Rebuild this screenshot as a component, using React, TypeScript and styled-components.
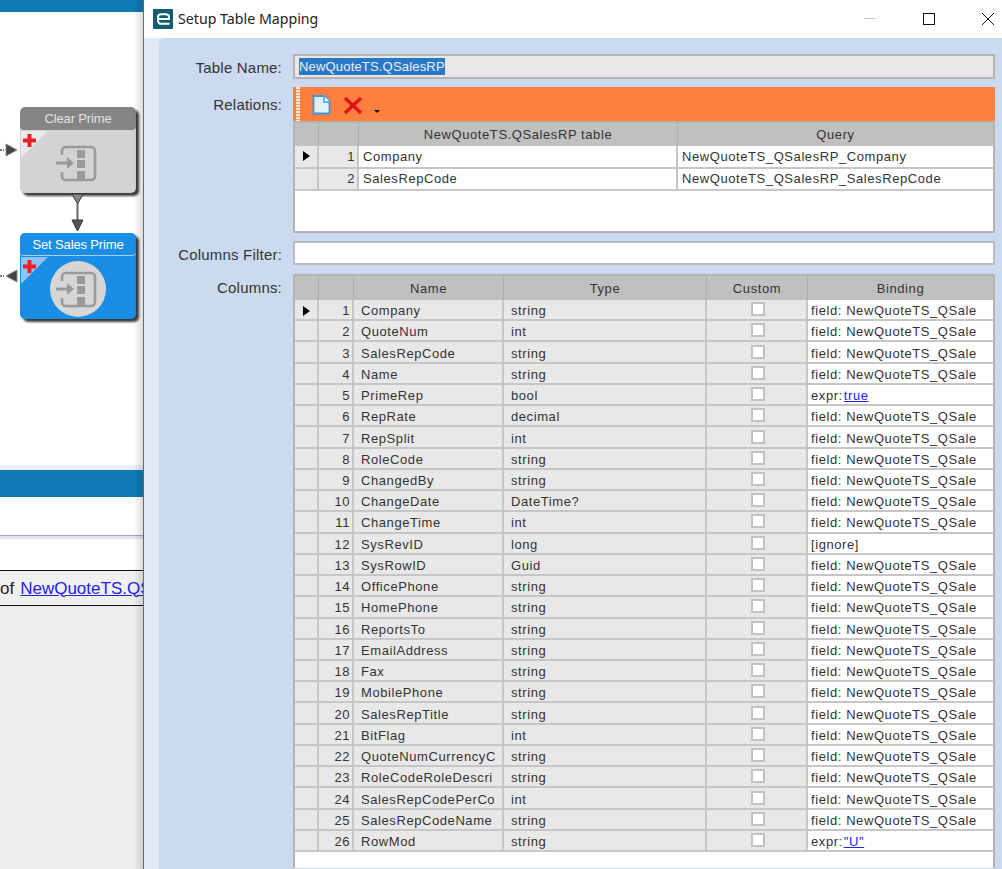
import styled, { createGlobalStyle } from "styled-components";

const GlobalStyle = createGlobalStyle`
  html, body { margin: 0; padding: 0; height: 100%; overflow: hidden; background: #fff; }
  #root { height: 869px; }
  * { box-sizing: border-box; }
`;

const Screen = styled.div`
  display: flex;
  width: 1002px;
  height: 869px;
  overflow: hidden;
  font-family: "Liberation Sans", Arial, sans-serif;
`;

/* ---- background designer window ---- */
const Backdrop = styled.div`
  position: relative;
  width: 143px;
  flex: none;
  display: flex;
  flex-direction: column;
  overflow: hidden;
  &::after {
    content: "";
    position: absolute;
    top: 0;
    right: 0;
    bottom: 0;
    width: 10px;
    background: linear-gradient(to right, rgba(0, 0, 0, 0), rgba(0, 0, 0, 0.13));
  }
`;
const TopStrip = styled.div`
  height: 12px;
  flex: none;
  background: #107ab5;
`;
const Canvas = styled.div`
  position: relative;
  height: 453px;
  flex: none;
  background: #fff;
`;
const LavenderLine = styled.div`
  height: 5px;
  flex: none;
  background: #eeeffb;
`;
const SectionBar = styled.div`
  height: 27px;
  flex: none;
  background: #107ab5;
`;
const BlankRow = styled.div<{ $h: number }>`
  height: ${({ $h }) => $h}px;
  flex: none;
  background: #fff;
`;
const Rule = styled.div`
  height: 4px;
  flex: none;
  background: #e0e3f4;
  border-top: 1px solid #a8a8a8;
`;
const MessageBar = styled.div`
  height: 36px;
  flex: none;
  display: flex;
  align-items: center;
  padding-top: 1px;
  white-space: nowrap;
  background: #f0f0f0;
  border-top: 1px solid #111;
  border-bottom: 1px solid #111;
  font-size: 17px;
  color: #222;
`;
const MessageLink = styled.a`
  margin-left: 6px;
  color: #2222ee;
  text-decoration: underline;
`;
const Filler = styled.div`
  flex: 1;
  background: #eeeeee;
`;

const Node = styled.div<{ $top: number; $active?: boolean }>`
  position: absolute;
  left: 20px;
  top: ${({ $top }) => $top}px;
  width: 116px;
  height: 86px;
  border-radius: 5px;
  overflow: hidden;
  background: ${({ $active }) => ($active ? "#1a8de4" : "#d3d3d3")};
`;
const NodeShadow = styled.div<{ $top: number }>`
  position: absolute;
  left: 23px;
  top: ${({ $top }) => $top}px;
  width: 116px;
  height: 86px;
  border-radius: 5px;
  background: #3c3c3c;
  filter: blur(1px);
`;
const NodeTitle = styled.div<{ $active?: boolean }>`
  height: 23px;
  display: flex;
  align-items: center;
  justify-content: center;
  font-size: 13px;
  letter-spacing: -0.15px;
  color: ${({ $active }) => ($active ? "#fff" : "#e2e2e2")};
  background: ${({ $active }) => ($active ? "#1a8de4" : "#858585")};
  border-bottom: 1px solid ${({ $active }) => ($active ? "#a8d0ee" : "#858585")};
  border-radius: 5px 5px 4px 4px;
`;
const NodeCorner = styled.div<{ $active?: boolean }>`
  position: absolute;
  left: 1px;
  top: 24px;
  width: 0;
  height: 0;
  border-style: solid;
  border-width: 27px 27px 0 0;
  border-color: ${({ $active }) => ($active ? "#8ec4ee" : "#e9e9e9")} transparent transparent transparent;
`;
const NodePlus = styled.svg`
  position: absolute;
  left: 3px;
  top: 27px;
`;
const NodeIcon = styled.svg`
  position: absolute;
  left: 36px;
  top: 35px;
`;
const NodeDisc = styled.div`
  position: absolute;
  left: 30px;
  top: 28px;
  width: 56px;
  height: 56px;
  border-radius: 50%;
  background: #d6d6d6;
`;
const Wires = styled.svg`
  position: absolute;
  left: 0;
  top: 0;
`;

const StepIcon = () => (
  <NodeIcon width="42" height="42" viewBox="0 0 42 42">
    <path d="M6 13V9a4 4 0 0 1 4-4h25a4 4 0 0 1 4 4v25a4 4 0 0 1-4 4H10a4 4 0 0 1-4-4v-4" fill="none" stroke="#9a9a9a" strokeWidth="2.6" />
    <path d="M0 21h15" stroke="#9a9a9a" strokeWidth="3" />
    <path d="M11 15l7 6-7 6z" fill="#9a9a9a" />
    <rect x="21" y="8" width="8" height="8" fill="#9a9a9a" />
    <rect x="21" y="18" width="8" height="8" fill="#9a9a9a" />
    <rect x="21" y="29" width="8" height="8" fill="#9a9a9a" />
  </NodeIcon>
);

const Plus = () => (
  <NodePlus width="13" height="13" viewBox="0 0 13 13">
    <path d="M4.5 0h4v4.5H13v4H8.5V13h-4V8.5H0v-4h4.5z" fill="#ee1c25" />
  </NodePlus>
);

/* ---- dialog ---- */
const Dialog = styled.div`
  flex: 1;
  display: flex;
  flex-direction: column;
  min-width: 0;
  border-left: 1px solid #6a6a6a;
  background: #fff;
`;
const TitleBar = styled.div`
  height: 38px;
  flex: none;
  display: flex;
  align-items: center;
  padding: 0 8px 0 9px;
`;
const AppLogo = styled.svg`
  flex: none;
`;
const TitleText = styled.div`
  margin: -2px 0 0 5px;
  font-family: "Noto Sans", sans-serif;
  font-size: 14.2px;
  color: #222;
`;
const WindowButtons = styled.div`
  margin-left: auto;
  display: flex;
  align-items: center;
  gap: 47px;
`;
const DialogBody = styled.div`
  flex: 1;
  min-height: 0;
  padding-left: 15px;
  background: #e0e9f5;
`;
const Panel = styled.div`
  height: 100%;
  display: grid;
  grid-template-columns: 123px 702px;
  grid-template-rows: 25px 146px 24px auto;
  row-gap: 8px;
  column-gap: 11px;
  align-content: start;
  padding-top: 16px;
  background: #cbdaef;
  border-radius: 5px 0 0 0;
`;
const Label = styled.div<{ $top?: number }>`
  padding-top: ${({ $top }) => $top ?? 5}px;
  text-align: right;
  font-size: 15px;
  letter-spacing: 0.2px;
  color: #333;
`;
const NameInput = styled.div`
  display: flex;
  align-items: center;
  padding-left: 4px;
  background: #e8e8e8;
  border: 2px solid #b2b2b2;
  font-size: 13px;
  letter-spacing: 0.18px;
`;
const Selected = styled.span`
  padding: 1px 0;
  background: #2a78c8;
  color: #e9f0f8;
`;
const FilterInput = styled.div`
  background: #fff;
  border: 2px solid #b8bcc2;
`;
const RelationsBox = styled.div`
  display: flex;
  flex-direction: column;
`;
const Toolbar = styled.div`
  position: relative;
  height: 34px;
  flex: none;
  display: flex;
  align-items: flex-start;
  background: #ff7f3f;
`;
const Gripper = styled.div`
  width: 4px;
  height: 34px;
  margin-left: 3px;
  background: repeating-linear-gradient(to bottom, #f2e7df 0 2px, #ff9c6c 2px 3px);
`;
const ToolDoc = styled.svg`
  margin: 8px 0 0 12px;
`;
const ToolX = styled.svg`
  margin: 9px 0 0 12px;
`;
const ToolCaret = styled.div`
  width: 0;
  height: 0;
  margin: 23px 0 0 11px;
  border-style: solid;
  border-width: 3px 3px 0;
  border-color: #111 transparent transparent;
`;
const GridBox = styled.div<{ $clip?: boolean }>`
  flex: 1;
  min-height: 0;
  background: #fff;
  border: 2px solid #b4b4b4;
  ${({ $clip }) => ($clip ? "border-bottom: none; height: 594px; margin-top: 1px;" : "")}
`;
const Row = styled.div<{ $cols: string; $h: number; $drop?: number }>`
  display: grid;
  grid-template-columns: ${({ $cols }) => $cols};
  height: ${({ $h }) => $h}px;
  font-size: 13px;
  letter-spacing: 0.58px;
  color: #333;
  & > div { padding-top: ${({ $drop }) => $drop ?? 0}px; }
`;
const HeaderCell = styled.div`
  display: flex;
  align-items: center;
  justify-content: center;
  background: #c0c0c0;
  border-right: 1px solid #aeaeae;
  &:last-child { border-right: none; }
`;
const Cell = styled.div<{ $white?: boolean; $center?: boolean; $right?: boolean; $inset?: number }>`
  display: flex;
  align-items: center;
  overflow: hidden;
  white-space: nowrap;
  padding-right: 2px;
  padding-left: ${({ $right, $inset }) => ($right ? 0 : $inset ?? 4)}px;
  justify-content: ${({ $center, $right }) => ($center ? "center" : $right ? "flex-end" : "flex-start")};
  background: ${({ $white }) => ($white ? "#fff" : "#e8e8e8")};
  border-right: 2px solid #c6c6c6;
  border-bottom: 2px solid #c6c6c6;
  &:last-child { border-right: none; }
`;
const Arrow = styled.div`
  width: 0;
  height: 0;
  margin-left: 4px;
  border-style: solid;
  border-width: 5.5px 0 5.5px 7px;
  border-color: transparent transparent transparent #000;
`;
const Check = styled.div`
  width: 14px;
  height: 14px;
  margin-bottom: 3px;
  background: #fff;
  border: 2px solid #c2c2c2;
`;
const ExprLink = styled.a`
  margin-left: 1px;
  color: #2222ee;
  text-decoration: underline;
`;

const relationCols = "24px 40px 319px 1fr";
const columnCols = "24px 35px 150px 203px 101px 1fr";
const field = "field: NewQuoteTS_QSale";

const relations = [
  ["Company", "NewQuoteTS_QSalesRP_Company"],
  ["SalesRepCode", "NewQuoteTS_QSalesRP_SalesRepCode"],
];

const columns: [string, string, string?][] = [
  ["Company", "string"],
  ["QuoteNum", "int"],
  ["SalesRepCode", "string"],
  ["Name", "string"],
  ["PrimeRep", "bool", "true"],
  ["RepRate", "decimal"],
  ["RepSplit", "int"],
  ["RoleCode", "string"],
  ["ChangedBy", "string"],
  ["ChangeDate", "DateTime?"],
  ["ChangeTime", "int"],
  ["SysRevID", "long", "ignore"],
  ["SysRowID", "Guid"],
  ["OfficePhone", "string"],
  ["HomePhone", "string"],
  ["ReportsTo", "string"],
  ["EmailAddress", "string"],
  ["Fax", "string"],
  ["MobilePhone", "string"],
  ["SalesRepTitle", "string"],
  ["BitFlag", "int"],
  ["QuoteNumCurrencyC", "string"],
  ["RoleCodeRoleDescri", "string"],
  ["SalesRepCodePerCo", "int"],
  ["SalesRepCodeName", "string"],
  ["RowMod", "string", '"U"'],
];

function Binding({ expr }: { expr?: string }) {
  if (!expr) return <>{field}</>;
  if (expr === "ignore") return <>[ignore]</>;
  return (
    <>
      expr:<ExprLink>{expr}</ExprLink>
    </>
  );
}

export default function App() {
  return (
    <Screen>
      <GlobalStyle />
      <Backdrop>
        <TopStrip />
        <Canvas>
          <NodeShadow $top={98} />
          <Node $top={95}>
            <NodeTitle>Clear Prime</NodeTitle>
            <NodeCorner />
            <Plus />
            <StepIcon />
          </Node>
          <NodeShadow $top={224} />
          <Node $top={221} $active>
            <NodeTitle $active>Set Sales Prime</NodeTitle>
            <NodeCorner $active />
            <Plus />
            <NodeDisc />
            <StepIcon />
          </Node>
          <Wires width="143" height="320" viewBox="0 0 143 320">
            <path d="M0 138h4" stroke="#555" strokeWidth="1.5" strokeDasharray="2 1" />
            <path d="M6 132l11 6-11 6z" fill="#444" stroke="#888" />
            <path d="M0 264h4" stroke="#555" strokeWidth="1.5" strokeDasharray="2 1" />
            <path d="M17 258l-11 6 11 6z" fill="#444" stroke="#888" />
            <path d="M72 182h11l-5.5 10z" fill="#888" stroke="#333" />
            <path d="M77.5 192v16" stroke="#666" strokeWidth="2" />
            <path d="M72 208h11l-5.5 11z" fill="#555" stroke="#333" />
          </Wires>
        </Canvas>
        <LavenderLine />
        <SectionBar />
        <BlankRow $h={38} />
        <Rule />
        <BlankRow $h={31} />
        <MessageBar>
          of<MessageLink>NewQuoteTS.QSalesRP</MessageLink>
        </MessageBar>
        <Filler />
      </Backdrop>

      <Dialog>
        <TitleBar>
          <AppLogo width="20" height="20" viewBox="0 0 20 20">
            <rect width="20" height="20" rx="1" fill="#0f5f70" />
            <path d="M5 10h11V8.2A3 3 0 0 0 13 5.2H8a3 3 0 0 0-3 3v3.6a3 3 0 0 0 3 3h8.5" fill="none" stroke="#fff" strokeWidth="2" />
          </AppLogo>
          <TitleText>Setup Table Mapping</TitleText>
          <WindowButtons>
            <svg width="12" height="12" viewBox="0 0 12 12">
              <path d="M0 5.5h12" stroke="#c8c8c8" />
            </svg>
            <svg width="12" height="12" viewBox="0 0 12 12">
              <rect x="0.5" y="0.5" width="11" height="11" fill="none" stroke="#111" />
            </svg>
            <svg width="12" height="12" viewBox="0 0 12 12">
              <path d="M0 0l12 12M12 0L0 12" stroke="#111" />
            </svg>
          </WindowButtons>
        </TitleBar>
        <DialogBody>
          <Panel>
            <Label>Table Name:</Label>
            <NameInput>
              <Selected>NewQuoteTS.QSalesRP</Selected>
            </NameInput>
            <Label $top={9}>Relations:</Label>
            <RelationsBox>
              <Toolbar>
                <Gripper />
                <ToolDoc width="19" height="20" viewBox="0 0 19 20">
                  <path d="M1.5 1h11l5 5v12.5h-16z" fill="#dff0fb" stroke="#3a97dc" strokeWidth="1.8" />
                  <path d="M12 1v6h6" fill="#fff" stroke="#3a97dc" strokeWidth="1.4" />
                </ToolDoc>
                <ToolX width="20" height="19" viewBox="0 0 20 19">
                  <path d="M2 2l16 15M18 2L2 17" stroke="#e0141c" strokeWidth="3.6" />
                </ToolX>
                <ToolCaret />
              </Toolbar>
              <GridBox>
                <Row $cols={relationCols} $h={23}>
                  <HeaderCell />
                  <HeaderCell />
                  <HeaderCell>NewQuoteTS.QSalesRP table</HeaderCell>
                  <HeaderCell>Query</HeaderCell>
                </Row>
                {relations.map(([name, query], i) => (
                  <Row key={name} $cols={relationCols} $h={22.5}>
                    <Cell>{i === 0 && <Arrow />}</Cell>
                    <Cell $right>{i + 1}</Cell>
                    <Cell $white>{name}</Cell>
                    <Cell $white>{query}</Cell>
                  </Row>
                ))}
              </GridBox>
            </RelationsBox>
            <Label>Columns Filter:</Label>
            <FilterInput />
            <Label $top={6}>Columns:</Label>
            <GridBox $clip>
              <Row $cols={columnCols} $h={24}>
                <HeaderCell />
                <HeaderCell />
                {["Name", "Type", "Custom", "Binding"].map((h) => (
                  <HeaderCell key={h}>{h}</HeaderCell>
                ))}
              </Row>
              {columns.map(([name, type, expr], i) => (
                <Row key={name} $cols={columnCols} $h={21.24} $drop={2}>
                  <Cell>{i === 0 && <Arrow />}</Cell>
                  <Cell $right>{i + 1}</Cell>
                  <Cell $inset={7}>{name}</Cell>
                  <Cell $inset={7}>{type}</Cell>
                  <Cell $center>
                    <Check />
                  </Cell>
                  <Cell $white $inset={3}>
                    <Binding expr={expr} />
                  </Cell>
                </Row>
              ))}
            </GridBox>
          </Panel>
        </DialogBody>
      </Dialog>
    </Screen>
  );
}
